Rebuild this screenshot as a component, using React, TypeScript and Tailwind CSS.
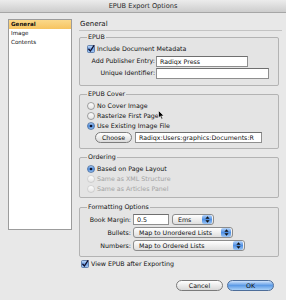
import React from 'react';

const FONT = { fontFamily: '"DejaVu Sans", "Liberation Sans", sans-serif' };

function CheckBox() {
  return (
    <svg width="8" height="8" viewBox="0 0 8 8" className="shrink-0">
      <defs>
        <linearGradient id="cb" x1="0" y1="0" x2="0" y2="1">
          <stop offset="0" stopColor="#c9defa" />
          <stop offset="0.5" stopColor="#6fa2e6" />
          <stop offset="1" stopColor="#a9cbf5" />
        </linearGradient>
      </defs>
      <rect x="0.5" y="0.5" width="7" height="7" rx="1" fill="url(#cb)" stroke="#4c6f9e" strokeWidth="0.8" />
      <path d="M1.8 4.2 L3.4 6 L6.9 0.6" fill="none" stroke="#101030" strokeWidth="1.3" strokeLinecap="round" />
    </svg>
  );
}

function Radio({ on = false, disabled = false }: { on?: boolean; disabled?: boolean }) {
  return (
    <svg width="8" height="8" viewBox="0 0 8 8" className="shrink-0">
      <defs>
        <linearGradient id="rb" x1="0" y1="0" x2="0" y2="1">
          <stop offset="0" stopColor="#b9d5f8" />
          <stop offset="0.5" stopColor="#4f8ee0" />
          <stop offset="1" stopColor="#9fc6f4" />
        </linearGradient>
        <linearGradient id="rw" x1="0" y1="0" x2="0" y2="1">
          <stop offset="0" stopColor="#ffffff" />
          <stop offset="1" stopColor="#e2e2e2" />
        </linearGradient>
      </defs>
      {on ? (
        <>
          <circle cx="4" cy="4" r="3.5" fill="url(#rb)" stroke="#44638f" strokeWidth="0.7" />
          <circle cx="4" cy="4" r="1.3" fill="#10142a" />
        </>
      ) : (
        <circle cx="4" cy="4" r="3.5" fill="url(#rw)" stroke={disabled ? '#c4c4c4' : '#7d7d7d'} strokeWidth="0.7" />
      )}
    </svg>
  );
}

function Popup({ label, width }: { label: string; width: string }) {
  return (
    <div className={`${width} h-[11px] flex items-center rounded-[3px] border border-[#8c8c8c] bg-linear-to-b from-white to-[#dedede] overflow-hidden`}>
      <span className="flex-1 pl-[5px] leading-[9px] truncate">{label}</span>
      <div className="w-[10px] h-full mr-[1px] my-[1px] rounded-[2px] bg-linear-to-b from-[#b7d5fa] via-[#4f8fe2] to-[#9cc6f5] flex items-center justify-center">
        <svg width="5" height="7" viewBox="0 0 5 7">
          <path d="M2.5 0.3 L4.6 2.8 L0.4 2.8 Z M2.5 6.7 L4.6 4.2 L0.4 4.2 Z" fill="#111" />
        </svg>
      </div>
    </div>
  );
}

function Field({ value = '', width }: { value?: string; width: string }) {
  return (
    <div className={`${width} h-[11px] bg-white border border-[#8f8f8f] border-t-[#6f6f6f] pl-[3px] leading-[9px] overflow-hidden whitespace-nowrap`}>
      {value}
    </div>
  );
}

function Group({ title, children, className = '' }: { title: string; children: React.ReactNode; className?: string }) {
  return (
    <fieldset className={`border border-[#b3b3b3] rounded-[2px] pl-[7px] pr-[4px] bg-[#e4e4e4] ${className}`}>
      <legend className="px-[1px] leading-[8px] h-[8px]">{title}</legend>
      {children}
    </fieldset>
  );
}

export default function App() {
  return (
    <div className="relative w-[286px] h-[300px] overflow-hidden bg-[#e8e8e8] text-[#111] text-[6.3px] flex flex-col" style={FONT}>
      {/* title bar */}
      <div className="h-[13px] shrink-0 bg-linear-to-b from-[#ececec] to-[#cdcdcd] border-b border-[#a6a6a6] flex items-center justify-center text-[#2a2a2a] text-[6.6px] leading-[12px]">
        EPUB Export Options
      </div>

      <div className="flex pt-[6px]">
        {/* sidebar */}
        <div className="ml-[8px] w-[64px] h-[211px] bg-white border border-[#9c9c9c] text-[5.6px]">
          <div className="h-[9px] leading-[9px] pl-[2px] bg-linear-to-b from-[#fbd98a] to-[#f6c35f] font-bold">General</div>
          <div className="h-[9px] leading-[9px] pl-[2px]">Image</div>
          <div className="h-[9px] leading-[9px] pl-[2px]">Contents</div>
        </div>

        {/* main column */}
        <div className="ml-[7px] w-[200px] flex flex-col">
          <div className="h-[12px] leading-[11px] pl-[1px] -mr-[3px] border-b border-[#c3c3c3] text-[7px]">General</div>

          <Group title="EPUB" className="mt-[2px] pt-[2px] pb-[6px]">
            <div className="h-[12px] flex items-center gap-[2px]">
              <CheckBox />
              <span>Include Document Metadata</span>
            </div>
            <div className="h-[12px] flex items-center gap-[1px]">
              <span className="w-[68px] text-right whitespace-nowrap">Add Publisher Entry:</span>
              <Field value="Radiqx Press" width="w-[92px]" />
            </div>
            <div className="h-[12px] flex items-center gap-[1px]">
              <span className="w-[68px] text-right whitespace-nowrap">Unique Identifier:</span>
              <Field width="w-[113px]" />
            </div>
          </Group>

          <Group title="EPUB Cover" className="mt-[4px] pt-[3px] pb-[5px]">
            <div className="h-[10px] flex items-center gap-[2px]">
              <Radio />
              <span>No Cover Image</span>
            </div>
            <div className="h-[10px] flex items-center gap-[2px]">
              <Radio />
              <span>Rasterize First Page</span>
            </div>
            <div className="h-[10px] flex items-center gap-[2px]">
              <Radio on />
              <span>Use Existing Image File</span>
            </div>
            <div className="mt-[1px] h-[11px] flex items-center gap-[3px] pl-[8px]">
              <div className="w-[37px] h-[11px] rounded-full border border-[#7c7c7c] bg-linear-to-b from-white to-[#dadada] flex items-center justify-center leading-[9px]">
                Choose
              </div>
              <Field value="Radiqx:Users:graphics:Documents:R" width="w-[127px]" />
            </div>
          </Group>

          <Group title="Ordering" className="mt-[4px] pt-[3px] pb-[3px]">
            <div className="h-[10px] flex items-center gap-[2px]">
              <Radio on />
              <span>Based on Page Layout</span>
            </div>
            <div className="h-[10px] flex items-center gap-[2px] text-[#a2a2a2]">
              <Radio disabled />
              <span>Same as XML Structure</span>
            </div>
            <div className="h-[10px] flex items-center gap-[2px] text-[#a2a2a2]">
              <Radio disabled />
              <span>Same as Articles Panel</span>
            </div>
          </Group>

          <Group title="Formatting Options" className="mt-[5px] pt-[3px] pb-[5px]">
            <div className="h-[11px] flex items-center">
              <span className="w-[44px] text-right whitespace-nowrap">Book Margin:</span>
              <div className="ml-[2px]">
                <Field value="0.5" width="w-[36px]" />
              </div>
              <div className="ml-[3px]">
                <Popup label="Ems" width="w-[42px]" />
              </div>
            </div>
            <div className="mt-[2px] h-[11px] flex items-center">
              <span className="w-[44px] text-right whitespace-nowrap">Bullets:</span>
              <div className="ml-[2px]">
                <Popup label="Map to Unordered Lists" width="w-[100px]" />
              </div>
            </div>
            <div className="mt-[2px] h-[11px] flex items-center">
              <span className="w-[44px] text-right whitespace-nowrap">Numbers:</span>
              <div className="ml-[2px]">
                <Popup label="Map to Ordered Lists" width="w-[112px]" />
              </div>
            </div>
          </Group>

          <div className="mt-[2px] h-[10px] flex items-center gap-[2px] pl-[2px]">
            <CheckBox />
            <span>View EPUB after Exporting</span>
          </div>

          <div className="mt-[11px] flex justify-end gap-[4px] pr-[5px]">
            <div className="w-[47px] h-[11px] rounded-full border border-[#7a7a7a] bg-linear-to-b from-white to-[#d8d8d8] flex items-center justify-center leading-[9px]">
              Cancel
            </div>
            <div className="w-[47px] h-[11px] rounded-full border border-[#4d6d99] bg-linear-to-b from-[#cfe3fb] via-[#5d9be6] to-[#a8d0f7] flex items-center justify-center leading-[9px]">
              OK
            </div>
          </div>
        </div>
      </div>

      {/* mouse pointer */}
      <svg className="absolute left-[158px] top-[110px]" width="7" height="10" viewBox="0 0 7 10">
        <path d="M0.5 0.5 L0.5 8 L2.3 6.3 L3.6 9.3 L4.8 8.8 L3.6 5.9 L6 5.9 Z" fill="#000" stroke="#fff" strokeWidth="0.6" />
      </svg>
    </div>
  );
}
